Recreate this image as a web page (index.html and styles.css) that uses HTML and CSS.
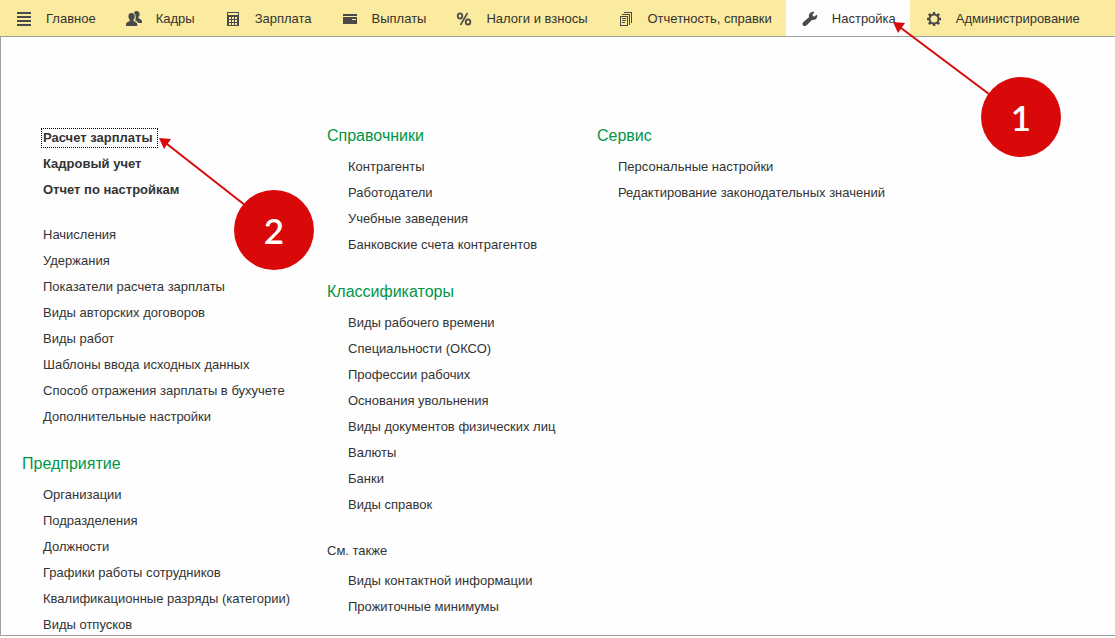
FILE: index.html
```html
<!DOCTYPE html>
<html lang="ru">
<head>
<meta charset="utf-8">
<meta name="viewport" content="width=device-width, initial-scale=1">
<title>Настройка</title>
<link rel="stylesheet" href="styles.css">
</head>
<body>
<nav class="sections">
  <a class="tab" href="#">
    <svg class="icon" viewBox="0 0 16 16" shape-rendering="crispEdges"><path d="M1 1h14v2H1zM1 5h14v2H1zM1 9h14v2H1zM1 13h14v2H1z"/></svg>
    <span>Главное</span>
  </a>
  <a class="tab" href="#">
    <svg class="icon" viewBox="0 0 16 16"><path d="M10.600 0C12.700 0 13.700 1.300 13.600 3.300C13.600 4.800 13.100 5.500 12.500 6.200V7.300L14.500 8.300C15.700 8.900 16 9.700 16 12H12.300C11.800 10.800 10.700 10.300 9 9.500C9.900 8.100 9.900 6.300 9.500 4.500C9.200 3 8.600 2.300 7.900 1.700C8.400 .5 9.400 0 10.600 0Z"/><path d="M5.500 2C7.900 2 8.900 3.500 8.800 5.600C8.700 7.200 8.200 8.200 7.500 8.900V10L10 11.200C11 11.700 11.400 12.700 11.400 15H0C0 12.700 .2 11.700 1.200 11.200L3.700 10V8.900C3 8.200 2.500 7.200 2.400 5.600C2.300 3.500 3.300 2 5.500 2Z"/></svg>
    <span>Кадры</span>
  </a>
  <a class="tab" href="#">
    <svg class="icon" viewBox="0 0 16 16" shape-rendering="crispEdges"><path fill-rule="evenodd" d="M2 1h12v14H2zM3 2v2h10V2zM4 6v2h2V6zM7 6v2h2V6zM10 6v2h2V6zM4 9v2h2V9zM7 9v2h2V9zM10 9v2h2V9zM4 12v2h2v-2zM7 12v2h2v-2zM10 12v2h2v-2z"/></svg>
    <span>Зарплата</span>
  </a>
  <a class="tab" href="#">
    <svg class="icon" viewBox="0 0 16 16" shape-rendering="crispEdges"><path fill-rule="evenodd" d="M1 3h14v2H1zM1 6h14v7H1zM10 8v1h4V8z"/></svg>
    <span>Выплаты</span>
  </a>
  <a class="tab" href="#">
    <svg class="icon" viewBox="0 0 16 16"><g fill="none" stroke="currentColor" stroke-width="1.800"><ellipse cx="4" cy="5" rx="2.300" ry="2.700"/><ellipse cx="12" cy="11" rx="2.300" ry="2.700"/><path d="M11.500 2L4.500 14" stroke-width="1.500"/></g></svg>
    <span>Налоги и взносы</span>
  </a>
  <a class="tab" href="#">
    <svg class="icon" viewBox="0 0 16 16" shape-rendering="crispEdges"><path d="M6 1h8v11h-1V2H6zM4 3h8v11h-1V4H4z"/><path fill-rule="evenodd" d="M2 5h8v10H2zM3 6v8h6V6zM4 7h4v1H4zM4 9h4v1H4zM4 11h3v1H4z"/></svg>
    <span>Отчетность, справки</span>
  </a>
  <a class="tab tab-active" href="#" aria-current="page">
    <svg class="icon" viewBox="0 0 16 16"><path d="M12.500 1L10.500 3.500L10.800 5.200L12.500 5.500L15 3.500C15.500 5.500 14.900 7.400 13.600 8.300C12.400 9.100 11.100 9.200 9.900 8.900L5 14C3.900 15.200 2.200 15.400 1.200 14.500C.2 13.500 .3 12 1.400 10.900L7 6.300C6.600 4.800 6.900 3.100 8.100 2C9.300 .9 11 .5 12.500 1Z"/></svg>
    <span>Настройка</span>
  </a>
  <a class="tab" href="#">
    <svg class="icon" viewBox="0 0 16 16"><g fill="none" stroke="currentColor"><circle cx="8" cy="8" r="4.500" stroke-width="2"/><path d="M8 1v2.500M8 12.500V15M1 8h2.500M12.500 8H15M2.800 2.800l2 2M11.200 11.200l2 2M2.800 13.200l2-2M11.200 4.800l2-2" stroke-width="2.400"/></g></svg>
    <span>Администрирование</span>
  </a>
</nav>

<main class="panel">
  <div class="column">
    <ul class="links links-main">
      <li><a class="focused" href="#">Расчет зарплаты</a></li>
      <li><a href="#">Кадровый учет</a></li>
      <li><a href="#">Отчет по настройкам</a></li>
    </ul>
    <ul class="links links-common">
      <li><a href="#">Начисления</a></li>
      <li><a href="#">Удержания</a></li>
      <li><a href="#">Показатели расчета зарплаты</a></li>
      <li><a href="#">Виды авторских договоров</a></li>
      <li><a href="#">Виды работ</a></li>
      <li><a href="#">Шаблоны ввода исходных данных</a></li>
      <li><a href="#">Способ отражения зарплаты в бухучете</a></li>
      <li><a href="#">Дополнительные настройки</a></li>
    </ul>
    <section class="group">
      <h2>Предприятие</h2>
      <ul class="links">
        <li><a href="#">Организации</a></li>
        <li><a href="#">Подразделения</a></li>
        <li><a href="#">Должности</a></li>
        <li><a href="#">Графики работы сотрудников</a></li>
        <li><a href="#">Квалификационные разряды (категории)</a></li>
        <li><a href="#">Виды отпусков</a></li>
      </ul>
    </section>
  </div>

  <div class="column">
    <section class="group">
      <h2>Справочники</h2>
      <ul class="links">
        <li><a href="#">Контрагенты</a></li>
        <li><a href="#">Работодатели</a></li>
        <li><a href="#">Учебные заведения</a></li>
        <li><a href="#">Банковские счета контрагентов</a></li>
      </ul>
    </section>
    <section class="group">
      <h2>Классификаторы</h2>
      <ul class="links">
        <li><a href="#">Виды рабочего времени</a></li>
        <li><a href="#">Специальности (ОКСО)</a></li>
        <li><a href="#">Профессии рабочих</a></li>
        <li><a href="#">Основания увольнения</a></li>
        <li><a href="#">Виды документов физических лиц</a></li>
        <li><a href="#">Валюты</a></li>
        <li><a href="#">Банки</a></li>
        <li><a href="#">Виды справок</a></li>
      </ul>
    </section>
    <section class="group">
      <h2 class="see-also">См. также</h2>
      <ul class="links">
        <li><a href="#">Виды контактной информации</a></li>
        <li><a href="#">Прожиточные минимумы</a></li>
      </ul>
    </section>
  </div>

  <div class="column">
    <section class="group">
      <h2>Сервис</h2>
      <ul class="links">
        <li><a href="#">Персональные настройки</a></li>
        <li><a href="#">Редактирование законодательных значений</a></li>
      </ul>
    </section>
  </div>
</main>

<div class="callout callout-first">
  <svg class="arrow" viewBox="0 0 128 96"><path class="shaft" d="M8 6L104 78"/><path class="head" d="M0 0L12 1L5 11Z"/></svg>
  <span class="number">1</span>
</div>
<div class="callout callout-second">
  <svg class="arrow" viewBox="0 0 128 96"><path class="shaft" d="M8 6L100 78"/><path class="head" d="M0 0L12 1L5 11Z"/></svg>
  <span class="number">2</span>
</div>
</body>
</html>
```

FILE: styles.css
```css
* {
  box-sizing: border-box;
}

body {
  position: relative;
  display: flex;
  flex-direction: column;
  min-height: 100vh;
  margin: 0;
  padding-bottom: 2px;
  background: #fefefe;
  color: #333;
  font: 13px/20px "Liberation Sans", Arial, sans-serif;
}

a {
  color: inherit;
  text-decoration: none;
}

.sections {
  display: flex;
  height: 36px;
  background: #fbeb9e;
}

.tab {
  display: flex;
  align-items: center;
  gap: 14px;
  padding: 1px 14px 0 16px;
  white-space: nowrap;
}

.tab-active {
  background: #fefefe;
}

.icon {
  flex: none;
  width: 16px;
  height: 16px;
  color: #4a4a4a;
  fill: currentColor;
}

.panel {
  display: grid;
  flex: 1;
  grid-template-columns: 305px 270px 1fr;
  padding: 89px 0 0 21px;
  border: solid #a0a0a0;
  border-width: 1px 0 1px 1px;
}

.links {
  display: flex;
  flex-direction: column;
  gap: 6px;
  margin: 0;
  padding: 0 0 0 21px;
  list-style: none;
  white-space: nowrap;
}

.links-main {
  padding-top: 2px;
  font-weight: bold;
}

.links-common {
  margin-top: 25px;
}

.focused {
  display: inline-block;
  margin: 0 -2px;
  padding: 0 5px 0 1px;
  border: 1px dotted #000;
  line-height: 18px;
  vertical-align: top;
}

.group + .group,
.links + .group {
  margin-top: 27px;
}

.group h2 {
  margin: 0 0 11px;
  color: #009646;
  font-size: 16px;
  font-weight: normal;
  line-height: 20px;
}

.group .see-also {
  margin: -1px 0 10px;
  color: #333;
  font-size: 13px;
}

.callout {
  position: absolute;
  pointer-events: none;
}

.callout-first {
  top: 22px;
  left: 893px;
  padding: 55px 0 0 88px;
}

.callout-second {
  top: 138px;
  left: 159px;
  padding: 52px 0 0 75px;
}

.arrow {
  position: absolute;
  top: 0;
  left: 0;
  width: 128px;
  height: 96px;
}

.shaft {
  fill: none;
  stroke: #d90909;
  stroke-width: 2;
}

.head {
  fill: #d90909;
}

.number {
  position: relative;
  display: block;
  width: 80px;
  height: 80px;
  border-radius: 50%;
  background: #d90909;
  color: #fff;
  font: 600 35px/80px Lato, sans-serif;
  text-align: center;
}
```
